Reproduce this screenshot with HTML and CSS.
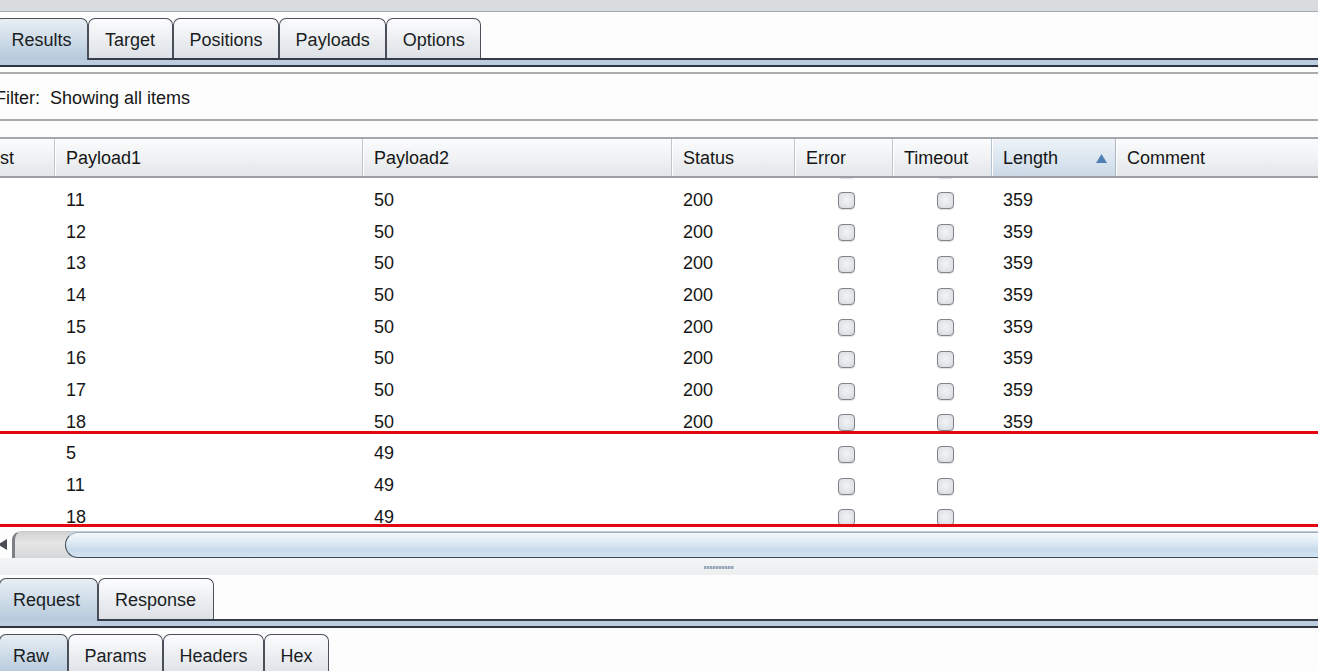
FILE: index.html
```html
<!DOCTYPE html>
<html>
<head>
<meta charset="utf-8">
<link rel="stylesheet" href="styles.css">
</head>
<body>
<div class="app">
  <div class="topband"></div>

  <div class="tabstrip top-tabs">
    <div class="tab active">Results</div>
    <div class="tab">Target</div>
    <div class="tab">Positions</div>
    <div class="tab">Payloads</div>
    <div class="tab">Options</div>
  </div>
  <div class="tabbase"></div>

  <div class="filter"><span class="filter-text">Filter:&nbsp; Showing all items</span></div>

  <div class="table">
    <div class="thead">
      <div class="th">Request</div>
      <div class="th">Payload1</div>
      <div class="th">Payload2</div>
      <div class="th">Status</div>
      <div class="th">Error</div>
      <div class="th">Timeout</div>
      <div class="th sorted">Length<svg class="sort" width="11" height="9" viewBox="0 0 11 9"><polygon points="5.5,0 11,9 0,9" fill="#4f81b5"/></svg></div>
      <div class="th last">Comment</div>
    </div>
    <div class="tbody">
      <div class="rows">
        <div class="tr"><div class="td"></div><div class="td"></div><div class="td"></div><div class="td"></div><div class="td cb"><span class="check"></span></div><div class="td cb"><span class="check"></span></div><div class="td"></div><div class="td"></div></div>
        <div class="tr"><div class="td"></div><div class="td">11</div><div class="td">50</div><div class="td">200</div><div class="td cb"><span class="check"></span></div><div class="td cb"><span class="check"></span></div><div class="td">359</div><div class="td"></div></div>
        <div class="tr"><div class="td"></div><div class="td">12</div><div class="td">50</div><div class="td">200</div><div class="td cb"><span class="check"></span></div><div class="td cb"><span class="check"></span></div><div class="td">359</div><div class="td"></div></div>
        <div class="tr"><div class="td"></div><div class="td">13</div><div class="td">50</div><div class="td">200</div><div class="td cb"><span class="check"></span></div><div class="td cb"><span class="check"></span></div><div class="td">359</div><div class="td"></div></div>
        <div class="tr"><div class="td"></div><div class="td">14</div><div class="td">50</div><div class="td">200</div><div class="td cb"><span class="check"></span></div><div class="td cb"><span class="check"></span></div><div class="td">359</div><div class="td"></div></div>
        <div class="tr"><div class="td"></div><div class="td">15</div><div class="td">50</div><div class="td">200</div><div class="td cb"><span class="check"></span></div><div class="td cb"><span class="check"></span></div><div class="td">359</div><div class="td"></div></div>
        <div class="tr"><div class="td"></div><div class="td">16</div><div class="td">50</div><div class="td">200</div><div class="td cb"><span class="check"></span></div><div class="td cb"><span class="check"></span></div><div class="td">359</div><div class="td"></div></div>
        <div class="tr"><div class="td"></div><div class="td">17</div><div class="td">50</div><div class="td">200</div><div class="td cb"><span class="check"></span></div><div class="td cb"><span class="check"></span></div><div class="td">359</div><div class="td"></div></div>
        <div class="tr"><div class="td"></div><div class="td">18</div><div class="td">50</div><div class="td">200</div><div class="td cb"><span class="check"></span></div><div class="td cb"><span class="check"></span></div><div class="td">359</div><div class="td"></div></div>
        <div class="tr"><div class="td"></div><div class="td">5</div><div class="td">49</div><div class="td"></div><div class="td cb"><span class="check"></span></div><div class="td cb"><span class="check"></span></div><div class="td"></div><div class="td"></div></div>
        <div class="tr"><div class="td"></div><div class="td">11</div><div class="td">49</div><div class="td"></div><div class="td cb"><span class="check"></span></div><div class="td cb"><span class="check"></span></div><div class="td"></div><div class="td"></div></div>
        <div class="tr"><div class="td"></div><div class="td">18</div><div class="td">49</div><div class="td"></div><div class="td cb"><span class="check"></span></div><div class="td cb"><span class="check"></span></div><div class="td"></div><div class="td"></div></div>
      </div>
      <div class="highlight"></div>
    </div>
  </div>

  <div class="hscroll">
    <div class="arrow"><svg width="9" height="11" viewBox="0 0 9 11"><polygon points="0,5.5 9,0 9,11" fill="#4a4e54"/></svg></div>
    <div class="track"><div class="thumb"></div></div>
  </div>

  <div class="splitter"><span class="grip"></span></div>

  <div class="tabstrip sub-tabs">
    <div class="tab active">Request</div>
    <div class="tab">Response</div>
  </div>
  <div class="tabbase"></div>

  <div class="tabstrip view-tabs">
    <div class="tab active">Raw</div>
    <div class="tab">Params</div>
    <div class="tab">Headers</div>
    <div class="tab">Hex</div>
  </div>
</div>
</body>
</html>
```

FILE: styles.css
```css
html, body {
  margin: 0;
  padding: 0;
  height: 100%;
  overflow: hidden;
  background: #fdfdfd;
}

.app {
  width: 1318px;
  height: 671px;
  overflow: hidden;
  font-family: "Liberation Sans", Arial, sans-serif;
  font-size: 18px;
  color: #161616;
  display: flex;
  flex-direction: column;
}

.topband {
  height: 11px;
  flex: none;
  background: #d8dcdf;
  border-bottom: 1px solid #a3a8ac;
}

/* ---------- tabs ---------- */
.tabstrip {
  display: flex;
  align-items: flex-end;
  flex: none;
}

.top-tabs {
  margin-top: 6px;
  margin-left: -5px;
}

.sub-tabs {
  margin-left: -1px;
}

.view-tabs {
  margin-top: 6px;
  margin-left: -1px;
}

.tab {
  height: 40px;
  box-sizing: border-box;
  padding: 3px 15.5px 0;
  display: flex;
  align-items: center;
  border: 1.5px solid #4a5059;
  border-bottom: none;
  border-radius: 7px 7px 0 0;
  background: linear-gradient(#fcfcfd 0%, #eef0f3 45%, #dde1e6 100%);
  color: #1a1e23;
  white-space: nowrap;
}

.top-tabs .tab:nth-child(2) {
  padding: 3px 17px 0 16px;
}

.tab.active {
  background: linear-gradient(#e8eef4 0%, #cfdce8 50%, #b4c9dc 100%);
  height: 42px;
  margin-bottom: -2px;
  padding-bottom: 2px;
  z-index: 1;
}

.sub-tabs .tab {
  height: 41px;
  padding: 3px 17px 0 16px;
}
.sub-tabs .tab.active {
  height: 43px;
  padding: 3px 17px 2px 13px;
}

.view-tabs .tab {
  height: 40px;
}
.view-tabs .tab.active {
  height: 40px;
  margin-bottom: 0;
  padding: 3px 18px 0 13px;
}

.tabbase {
  flex: none;
  height: 5px;
  background: #bccde0;
  border-top: 2px solid #363d48;
  border-bottom: 2px solid #2e3540;
}

/* ---------- filter ---------- */
.filter {
  flex: none;
  margin-top: 5px;
  border-top: 2px solid #a9abad;
  border-bottom: 2px solid #a9abad;
  background: #fdfdfd;
  display: flex;
  align-items: center;
  padding-top: 3px;
  height: 42px;
}

.filter-text {
  margin-left: -5px;
  white-space: pre;
}

/* ---------- table ---------- */
.table {
  flex: none;
  margin-top: 16px;
  overflow: hidden;
}

.thead,
.tr {
  display: grid;
  grid-template-columns: 119px 308px 309px 123px 98px 99px 124px 1fr;
  width: calc(100% + 64px);
  margin-left: -64px;
}

.thead {
  height: 37px;
  border-top: 2px solid #a4a8ad;
  border-bottom: 2px solid #9b9fa4;
  background: linear-gradient(#fafbfc 0%, #f0f2f4 50%, #e3e6ea 100%);
}

.th {
  display: flex;
  align-items: center;
  padding-left: 11px;
  padding-top: 1px;
  border-right: 1px solid #c2c6cb;
  box-shadow: inset 1px 0 0 #ffffff;
  white-space: nowrap;
  overflow: hidden;
}

.th.last {
  border-right: none;
}

.th.sorted {
  justify-content: space-between;
  padding-right: 8px;
  background: linear-gradient(#eef3f8 0%, #dde7f0 50%, #cbd9e6 100%);
  border-left: 1px solid #b5c2cf;
  border-right: 1px solid #aab8c6;
  margin-left: -1px;
}

.sort {
  display: block;
}

.tbody {
  height: 350px;
  overflow: hidden;
  position: relative;
  background: #ffffff;
}

.rows {
  margin-top: -26.55px;
}

.tr {
  height: 31.7px;
}

.td {
  display: flex;
  align-items: center;
  padding-left: 11px;
  padding-top: 3px;
  white-space: nowrap;
}

.td.cb {
  justify-content: center;
  padding-left: 5px;
  padding-top: 4px;
}

.check {
  width: 17px;
  height: 17px;
  box-sizing: border-box;
  border: 1.5px solid #7f848b;
  border-radius: 4px;
  background: radial-gradient(circle at 50% 45%, #f2f3f5 0%, #e2e4e8 60%, #d0d3d8 100%);
  box-shadow: 0 1px 1px rgba(0, 0, 0, 0.12);
}

.highlight {
  position: absolute;
  top: 252.5px;
  left: -10px;
  right: -10px;
  height: 96px;
  box-sizing: border-box;
  border: 3px solid #e3050f;
  pointer-events: none;
}

/* ---------- horizontal scrollbar ---------- */
.hscroll {
  flex: none;
  height: 30px;
  box-sizing: border-box;
  padding-top: 3px;
  display: flex;
  background: #fdfdfd;
}

.arrow {
  width: 14px;
  flex: none;
  display: flex;
  align-items: center;
  margin-left: -2px;
}

.track {
  flex: 1;
  display: flex;
  border-radius: 9px 0 0 0;
  background: linear-gradient(#d2d2d3 0%, #e6e6e7 40%, #d6d7d8 100%);
  border-left: 3px solid #7c7f83;
  border-top: 1px solid #c8c9cb;
}

.thumb {
  flex: 1;
  margin-left: 50px;
  border: 1.5px solid #3c4856;
  border-top-color: #9cb0c4;
  border-right: none;
  border-radius: 15px 0 0 15px;
  background: linear-gradient(#f4f8fc 0%, #e1ecf6 35%, #c8daeb 70%, #d4e3f0 100%);
}

/* ---------- splitter ---------- */
.splitter {
  flex: none;
  height: 17px;
  margin-bottom: 3px;
  background: linear-gradient(#f3f4f5 0%, #eceef0 100%);
  display: flex;
  align-items: flex-start;
}

.grip {
  margin-left: 704px;
  margin-top: 8px;
  width: 30px;
  height: 3px;
  background: repeating-linear-gradient(90deg, #98a6ba 0 2px, #c4cdd9 2px 3px);
}
```
